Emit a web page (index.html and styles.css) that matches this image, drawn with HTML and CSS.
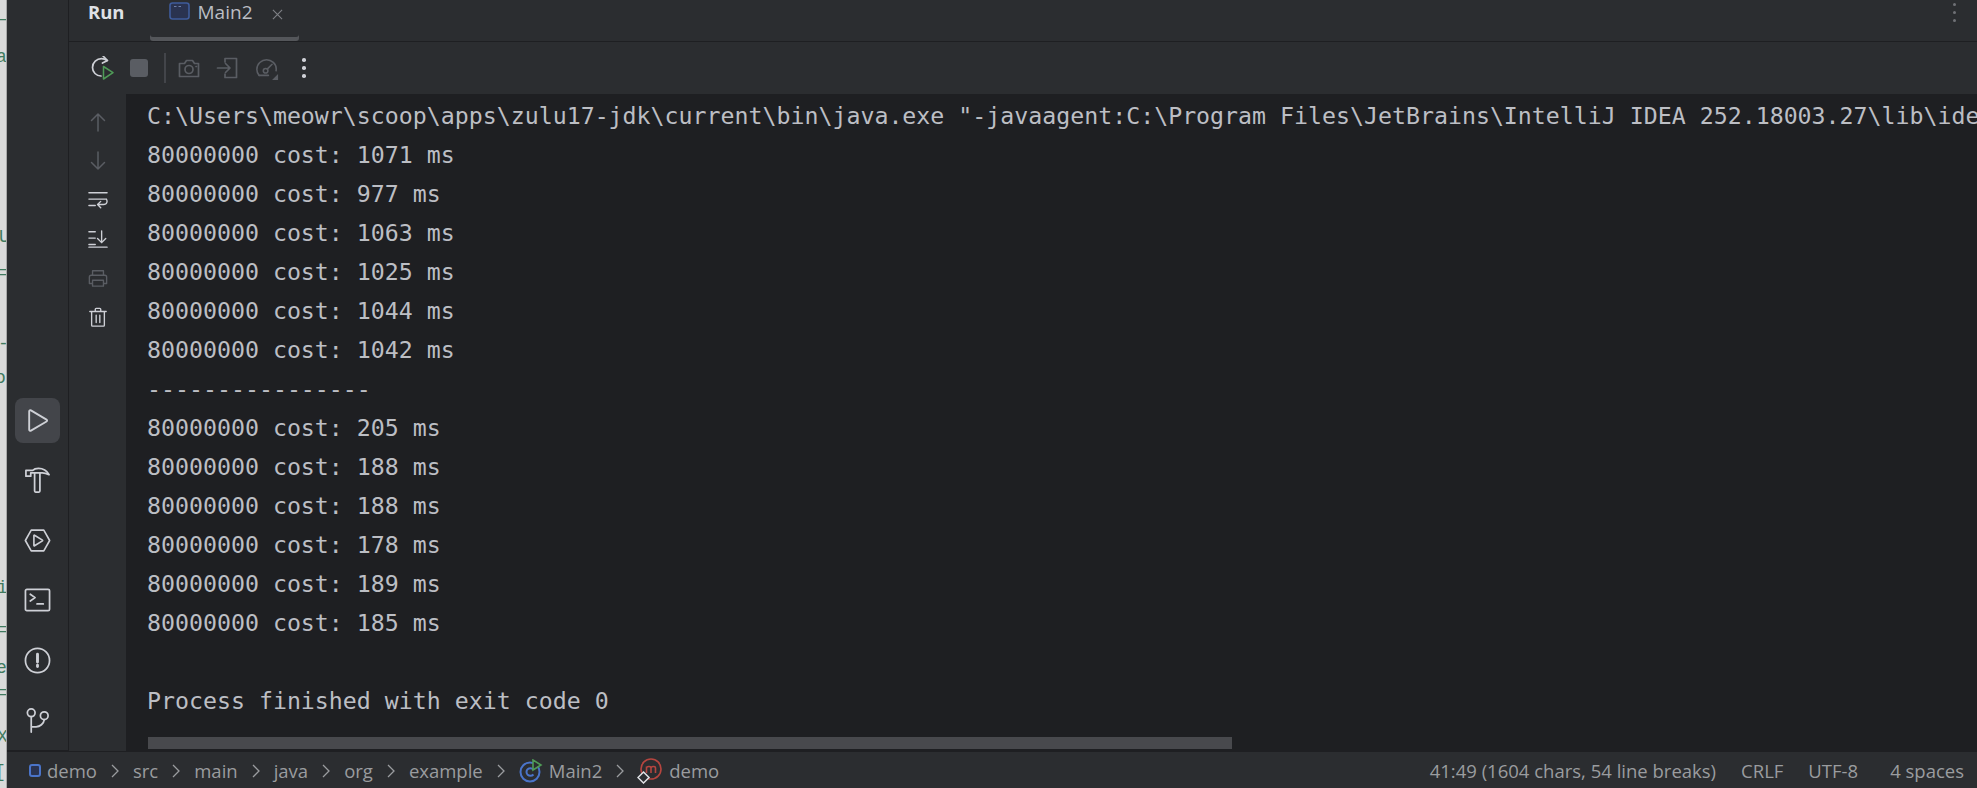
FILE: index.html
```html
<!DOCTYPE html>
<html lang="en">
<head>
<meta charset="utf-8">
<title>Run - Main2</title>
<link rel="stylesheet" href="styles.css">
</head>
<body>
<div class="app">
  <div class="behind" aria-hidden="true">
    <span class="frag f1">—</span>
    <span class="frag f2">a</span>
    <span class="frag f3">U</span>
    <span class="frag f4">=</span>
    <span class="frag f5">-</span>
    <span class="frag f6">o</span>
    <span class="frag f7">i</span>
    <span class="frag f8">=</span>
    <span class="frag f9">e</span>
    <span class="frag f10">=</span>
    <span class="frag f11">X</span>
    <span class="frag f12">[i</span>
  </div>
  <div class="ide">
    <div class="workspace">
      <nav class="stripe">
        <div class="stripe-btn active">
          <svg class="ico24" viewBox="0 0 26 26"><path d="M5 4.200v17.600c0 .9 1 1.400 1.700 1l15-8.800c.7-.4.7-1.500 0-1.900l-15-8.800c-.7-.4-1.700.1-1.700.9z"/></svg>
        </div>
        <div class="stripe-btn">
          <svg class="ico24" viewBox="0 0 28 28"><path d="M2 3.500h7c1.500-1.500 3.500-2 6-2 4 0 8.500 2 11 6.500-3-1.500-5-2-7-2H7v3.500H2z"/><path d="M11 6v19c0 .6.400 1 1 1h3.500c.6 0 1-.4 1-1V6"/></svg>
        </div>
        <div class="stripe-btn">
          <svg class="ico24" viewBox="0 0 30 26"><path d="M1.500 13 8 1.500h14L28.500 13 22 24.500H8z"/><path d="M11 7.500v11c0 .4.400.6.700.4l8.800-5.500c.3-.2.300-.6 0-.8l-8.800-5.500c-.3-.2-.7 0-.7.400z"/></svg>
        </div>
        <div class="stripe-btn">
          <svg class="ico24" viewBox="0 0 28 26"><rect x="1.500" y="1.500" width="25" height="22" rx="1.500"/><path d="M6.500 6.500 11.500 10l-5 3.500M13.500 16.500h6.500"/></svg>
        </div>
        <div class="stripe-btn">
          <svg class="ico24" viewBox="0 0 28 28"><circle cx="14" cy="14" r="12.500"/><path class="thick" d="M14 7.500v8M14 18.800v1.500"/></svg>
        </div>
        <div class="stripe-btn">
          <svg class="ico24" viewBox="0 0 26 28"><circle cx="6.500" cy="6" r="4"/><circle cx="20" cy="9" r="4"/><path d="M6.500 10v16M6.500 20.500h5c4 0 8-3 8.500-7.500"/></svg>
        </div>
      </nav>
      <main class="toolwindow">
        <header class="tabs">
          <span class="tabs-title">Run</span>
          <div class="tab">
            <svg class="tab-icon" viewBox="0 0 21 18"><rect x="1" y="1" width="19" height="16" rx="2.500"/><path d="M5 4.500h2.500M9.500 4.500H12"/></svg>
            <span class="tab-label">Main2</span>
            <svg class="tab-close" viewBox="0 0 12 12"><path d="M1 1l10 10M11 1 1 11"/></svg>
          </div>
          <div class="more-top"><i></i><i></i><i></i></div>
        </header>
        <div class="toolbar">
          <svg class="tool rerun" viewBox="0 0 24 24"><path class="lt" d="M17 4.500C15.500 3.300 13.800 2.700 11.500 2.700 6.800 2.700 2.500 6.500 2.500 11.500c0 4.700 3.800 8.500 8.500 8.500"/><path class="lt" d="M13 0 17.500 4.500l-5 2.500"/><path class="run" d="M13.500 10.500v12.500L23 16.700z"/></svg>
          <span class="stop"></span>
          <span class="sep"></span>
          <svg class="tool dim" viewBox="0 0 24 24"><path d="M2.500 7.500h5l2-3h6l2 3h4v13h-19z" stroke-linejoin="round"/><circle cx="12" cy="13.500" r="4"/><path d="M19 10.500h.5"/></svg>
          <svg class="tool dim" viewBox="0 0 24 24"><path d="M9 6V2.500h11.500v19H9V18"/><path d="M1.500 12h12M9.500 7.500l4.500 4.500-4.500 4.500"/></svg>
          <svg class="tool dim" viewBox="0 0 26 24"><path d="M4.500 20C2.800 18 2 16 2 13.500 2 7.500 7 3 12.500 3S23 7.500 23 13c0 .8-.1 1.500-.2 2"/><path d="M4.500 20h10"/><circle cx="11.500" cy="15" r="2.500"/><path d="M13.500 13l5-5"/><path class="fill" d="M25 18.500V25h-6.500z"/></svg>
          <div class="more"><i></i><i></i><i></i></div>
        </div>
        <div class="content">
          <aside class="sidebar">
            <svg class="side dim" viewBox="0 0 20 20"><path d="M10 2v17M3.500 8.500 10 2l6.500 6.500"/></svg>
            <svg class="side dim" viewBox="0 0 20 20"><path d="M10 1v17M3.500 11.500 10 18l6.500-6.500"/></svg>
            <svg class="side" viewBox="0 0 22 20"><path d="M1 2h20M1 9h18M1 16h7M20 9c1.500 1.500 1.500 6-3 6h-6M14 11.500 10.500 15l3.500 3.500"/></svg>
            <svg class="side" viewBox="0 0 22 20"><path d="M1 2h7M1 9h7M1 16h7M1 19h20M15 1v13M10.500 9.500 15 14l4.500-4.500"/></svg>
            <svg class="side dim" viewBox="0 0 22 20"><path d="M5 7V2h12v5M5 16H1.500V9c0-1 1-2 2-2h15c1 0 2 1 2 2v7H17M5 12.500h12V19H5z"/></svg>
            <svg class="side" viewBox="0 0 20 22"><path d="M1 5h18M7 5V2.500c0-.6.400-1 1-1h4c.6 0 1 .4 1 1V5M3 5v15c0 .6.400 1 1 1h12c.6 0 1-.4 1-1V5M8 9v8M12 9v8"/></svg>
          </aside>
          <section class="console">
<pre class="output">C:\Users\meowr\scoop\apps\zulu17-jdk\current\bin\java.exe "-javaagent:C:\Program Files\JetBrains\IntelliJ IDEA 252.18003.27\lib\idea_rt.jar=51234" -Dfile.encoding=UTF-8
80000000 cost: 1071 ms
80000000 cost: 977 ms
80000000 cost: 1063 ms
80000000 cost: 1025 ms
80000000 cost: 1044 ms
80000000 cost: 1042 ms
----------------
80000000 cost: 205 ms
80000000 cost: 188 ms
80000000 cost: 188 ms
80000000 cost: 178 ms
80000000 cost: 189 ms
80000000 cost: 185 ms

Process finished with exit code 0</pre>
            <div class="hscroll"></div>
          </section>
        </div>
      </main>
    </div>
    <footer class="status">
      <div class="crumbs">
        <span class="module-dot"></span>
        <span>demo</span><svg class="chev" viewBox="0 0 8 14"><path d="M1 1l6 6-6 6"/></svg>
        <span>src</span><svg class="chev" viewBox="0 0 8 14"><path d="M1 1l6 6-6 6"/></svg>
        <span>main</span><svg class="chev" viewBox="0 0 8 14"><path d="M1 1l6 6-6 6"/></svg>
        <span>java</span><svg class="chev" viewBox="0 0 8 14"><path d="M1 1l6 6-6 6"/></svg>
        <span>org</span><svg class="chev" viewBox="0 0 8 14"><path d="M1 1l6 6-6 6"/></svg>
        <span>example</span><svg class="chev" viewBox="0 0 8 14"><path d="M1 1l6 6-6 6"/></svg>
        <svg class="class-icon" viewBox="0 0 24 24"><circle class="ring" cx="11" cy="13" r="9.500"/><path class="ring" d="M14.500 10.500c-1-1-2-1.300-3-1.300-2.200 0-4 1.700-4 3.800s1.800 3.800 4 3.800c1 0 2-.3 3-1.300"/><path class="play" d="M14 1v10l8-5z"/></svg>
        <span class="gap-s">Main2</span><svg class="chev" viewBox="0 0 8 14"><path d="M1 1l6 6-6 6"/></svg>
        <svg class="method-icon" viewBox="0 0 26 26"><circle class="mring" cx="14" cy="11" r="10"/><path class="mring" d="M9.500 15V8.500M9.500 10c0-1.500 4.500-2.500 4.500 0v5M14 10c0-1.500 4.500-2.500 4.500 0v5"/><path class="diamond" d="M6.500 14 12 19.500 6.500 25 1 19.500z"/></svg>
        <span class="gap-s">demo</span>
      </div>
      <div class="status-right">
        <span>41:49 (1604 chars, 54 line breaks)</span>
        <span>CRLF</span>
        <span>UTF-8</span>
        <span class="gap-l">4 spaces</span>
      </div>
    </footer>
  </div>
</div>
</body>
</html>
```
FILE: styles.css
```css
* { box-sizing: border-box; }
html, body { margin: 0; height: 100%; overflow: hidden; background: #2b2d30; }
svg { display: block; flex: none; fill: none; }

.app { display: flex; height: 788px; width: 1977px; }

.behind {
  position: relative;
  width: 7px;
  flex: none;
  overflow: hidden;
  background: #dadada;
  border-right: 1px solid #a9a9a9;
  color: #3f7a5f;
  font: 18px/20px "Liberation Mono", monospace;
}
.frag { position: absolute; left: 0; }
.f1 { top: 9px; left: -3px; }
.f2 { top: 47px; left: -4px; }
.f3 { top: 227px; left: -1px; }
.f4 { top: 263px; left: -3px; }
.f5 { top: 334px; left: -2px; }
.f6 { top: 368px; left: -5px; }
.f7 { top: 578px; left: -3px; }
.f8 { top: 620px; left: -3px; }
.f9 { top: 658px; left: -4px; }
.f10 { top: 683px; left: -3px; }
.f11 { top: 727px; left: -3px; }
.f12 { top: 762px; left: -5px; }

.ide { flex: 1; min-width: 0; display: flex; flex-direction: column; }
.workspace { flex: 1; min-height: 0; display: flex; }

.stripe {
  width: 62px;
  flex: none;
  background: #2b2d30;
  border-right: 1px solid #1e1f22;
  padding: 398px 0 0 8px;
  display: flex;
  flex-direction: column;
  gap: 15px;
  box-shadow: inset 0 -1px 0 #1e1f22;
}
.stripe-btn {
  width: 45px;
  height: 45px;
  display: flex;
  align-items: center;
  justify-content: center;
  border-radius: 8px;
}
.stripe-btn.active { background: #43454a; }
.ico24 { width: 27px; height: 27px; }
.ico24 path, .ico24 rect, .ico24 circle { stroke: #ced0d6; stroke-width: 1.800; stroke-linejoin: round; stroke-linecap: round; }
.ico24 .thick { stroke-width: 3; }

.toolwindow { flex: 1; min-width: 0; display: flex; flex-direction: column; background: #2b2d30; }

.tabs {
  height: 42px;
  flex: none;
  display: flex;
  position: relative;
  align-items: flex-start;
  padding: 0 0 0 19px;
  border-bottom: 1px solid #1e1f22;
  font-family: "Open Sans", sans-serif;
}
.tabs-title { font-size: 18.500px; line-height: 24px; font-weight: 700; color: #dfe1e5; }
.tab {
  margin-left: 25px;
  width: 149px;
  height: 41px;
  display: flex;
  align-items: flex-start;
  padding: 2px 0 0 19px;
  box-shadow: inset 0 -4px 0 #54565a;
  border-radius: 0 0 3px 3px;
}
.tab-icon { width: 21px; height: 18px; }
.tab-icon rect { fill: #2a3350; stroke: #3f5c9c; stroke-width: 1.600; }
.tab-icon path { stroke: #6d7fa8; stroke-width: 1; }
.tab-label { margin: -2px 0 0 8px; font-size: 19px; line-height: 24px; color: #bcbec4; }
.tab-close { width: 11px; height: 11px; margin: 7px 0 0 19px; }
.tab-close path { stroke: #7f8186; stroke-width: 1.200; }
.more-top {
  position: absolute;
  right: 21px;
  top: 3px;
  display: flex;
  flex-direction: column;
  gap: 5px;
}
.more-top i { width: 3px; height: 3px; border-radius: 50%; background: #6f7176; display: block; }

.toolbar {
  height: 52px;
  flex: none;
  display: flex;
  align-items: center;
  padding-left: 21px;
}
.tool { width: 24px; height: 24px; }
.tool path, .tool circle { stroke-width: 1.700; stroke-linecap: round; stroke-linejoin: round; }
.tool .lt { stroke: #ced0d6; }
.tool .run { stroke: #4f9b57; stroke-width: 1.500; }
.tool.dim { margin-right: 15px; }
.tool.dim path, .tool.dim circle { stroke: #5a5d63; }
.tool.dim .fill { fill: #5a5d63; stroke: none; }
.rerun { margin-right: 16px; }
.stop { width: 18px; height: 18px; border-radius: 3px; background: #5a5d63; flex: none; }
.sep { width: 2px; height: 30px; background: #43454a; margin: 0 11px 0 16px; flex: none; }
.more { display: flex; flex-direction: column; gap: 4.500px; margin-left: 8px; }
.more i { width: 3.500px; height: 3.500px; border-radius: 50%; background: #ced0d6; display: block; }

.content { flex: 1; min-height: 0; display: flex; }

.sidebar {
  width: 57px;
  flex: none;
  display: flex;
  flex-direction: column;
  align-items: center;
  padding: 18px 0 0 1px;
  gap: 19px;
}
.side { width: 20px; height: 20px; }
.side path { stroke: #ced0d6; stroke-width: 1.500; stroke-linecap: round; stroke-linejoin: round; }
.side.dim path { stroke: #5a5d63; }

.console {
  position: relative;
  flex: 1;
  min-width: 0;
  overflow: hidden;
  background: #1e1f22;
  padding: 2px 0 0 21px;
}
.output {
  margin: 0;
  white-space: pre;
  font-family: "DejaVu Sans Mono", monospace;
  font-size: 23.240px;
  line-height: 39px;
  color: #bcbec4;
}
.hscroll {
  position: absolute;
  left: 22px;
  bottom: 2px;
  width: 1084px;
  height: 12px;
  background: #48494d;
}

.status {
  height: 37px;
  flex: none;
  display: flex;
  align-items: center;
  justify-content: space-between;
  padding: 1px 13px 0 22px;
  background: #2b2d30;
  border-top: 1px solid #1e1f22;
  font-family: "Open Sans", sans-serif;
  font-size: 18.500px;
  color: #9a9c9f;
}
.crumbs { display: flex; align-items: center; }
.module-dot {
  width: 12px;
  height: 13px;
  border-radius: 3px;
  background: #2a3350;
  border: 2px solid #4a74c9;
  margin-right: 6px;
  flex: none;
}
.chev { width: 8px; height: 14px; margin: 0 14px; }
.chev path { stroke: #9a9c9f; stroke-width: 1.300; }
.class-icon { width: 24px; height: 24px; }
.class-icon .ring { stroke: #4a74c9; stroke-width: 2; }
.class-icon .play { fill: #2b2d30; stroke: #4f9b57; stroke-width: 1.600; }
.gap-s { margin-left: 6px; }
.method-icon { width: 26px; height: 26px; margin-left: -1px; }
.method-icon .mring { stroke: #b5453f; stroke-width: 1.600; }
.method-icon .diamond { fill: #2b2d30; stroke: #dfe1e5; stroke-width: 1.500; }
.status-right { display: flex; align-items: center; gap: 25px; }
.gap-l { margin-left: 7px; }
```
